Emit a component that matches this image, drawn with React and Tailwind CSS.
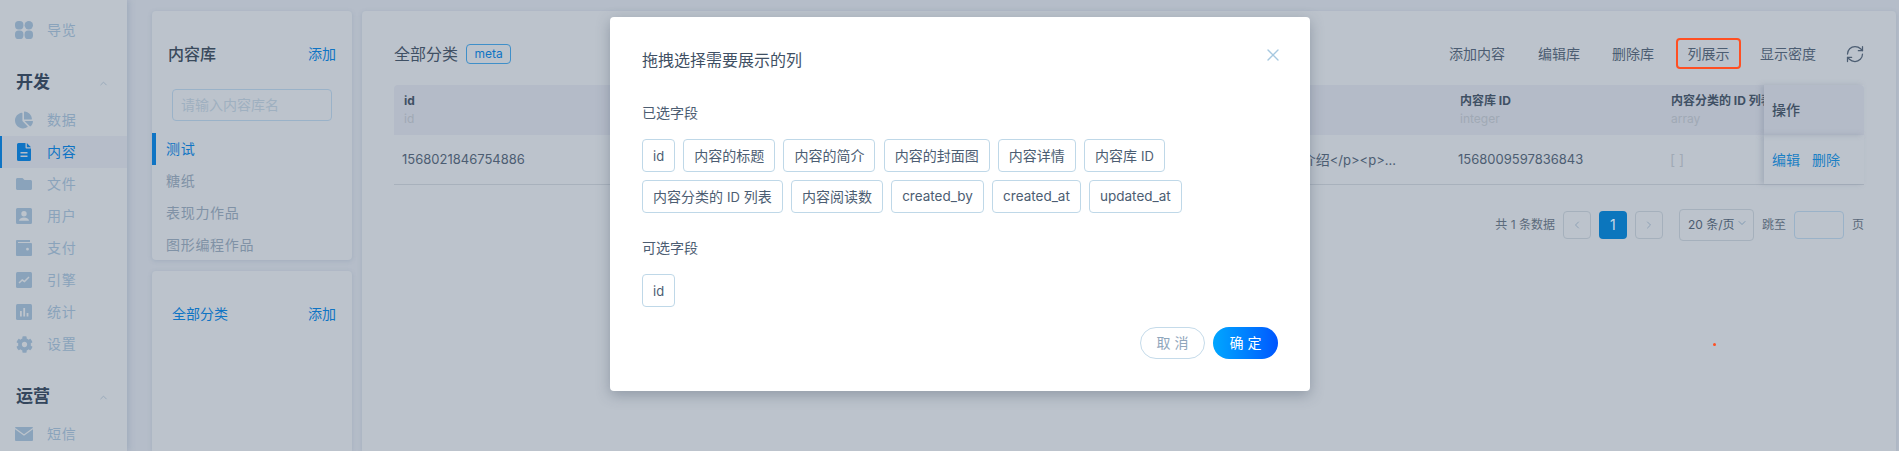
import React from "react";
import { ChevronDown, ChevronLeft, ChevronRight, ChevronUp, RefreshCw, X } from "lucide-react";
import { FaChartPie, FaCog, FaFolder } from "react-icons/fa";

const GridIcon = () => (
  <svg viewBox="0 0 18 18" className="w-[18px] h-[18px]" fill="currentColor">
    <rect x="0" y="0" width="8.4" height="8.4" rx="3.6" />
    <rect x="9.6" y="0" width="8.4" height="8.4" rx="4.2" />
    <rect x="0" y="9.6" width="8.4" height="8.4" rx="3.6" />
    <rect x="9.6" y="9.6" width="8.4" height="8.4" rx="3.6" />
  </svg>
);

const FileIcon = () => (
  <svg viewBox="0 0 14 18" className="w-[14px] h-[18px]" fill="currentColor">
    <path fillRule="evenodd" d="M1.500 0H8.500V4.500a1 1 0 0 0 1 1H14V16.500a1.500 1.500 0 0 1-1.500 1.500h-11A1.500 1.500 0 0 1 0 16.500v-15A1.500 1.500 0 0 1 1.500 0zM3.500 9v1.500h7V9zM3.500 12.500V14h7v-1.500z" />
    <path d="M9.800 0L14 4.300H9.800z" />
  </svg>
);

const UserIcon = () => (
  <svg viewBox="0 0 16 16" className="w-4 h-4" fill="currentColor">
    <path fillRule="evenodd" d="M1.5 0h13A1.5 1.5 0 0 1 16 1.5v13a1.5 1.5 0 0 1-1.5 1.5h-13A1.5 1.5 0 0 1 0 14.500v-13A1.500 1.500 0 0 1 1.500 0zM8 3a2.700 2.700 0 1 0 0 5.400A2.700 2.700 0 0 0 8 3zM3 12.800h10c0-2-2.200-3.300-5-3.300s-5 1.300-5 3.300z" />
  </svg>
);

const WalletIcon = () => (
  <svg viewBox="0 0 16 16" className="w-4 h-4" fill="currentColor">
    <path fillRule="evenodd" d="M1 0h13v2H2v1h13a1 1 0 0 1 1 1v11a1 1 0 0 1-1 1H1a1 1 0 0 1-1-1V1a1 1 0 0 1 1-1zm10.500 7.800a1.400 1.400 0 1 0 0 2.800 1.400 1.400 0 0 0 0-2.800z" />
  </svg>
);

const EngineIcon = () => (
  <svg viewBox="0 0 16 16" className="w-4 h-4">
    <rect width="16" height="16" rx="1.5" fill="currentColor" />
    <path d="M3 11l3.200-3 2.300 1.500L13 5" fill="none" stroke="#bdc4cc" strokeWidth="1.500" />
  </svg>
);

const StatsIcon = () => (
  <svg viewBox="0 0 16 16" className="w-4 h-4">
    <rect width="16" height="16" rx="1.5" fill="currentColor" />
    <path d="M4 7h1.800v5.500H4zM7.300 4h1.800v8.500H7.300zM10.600 9h1.800v3.500h-1.800z" fill="#bdc4cc" />
  </svg>
);

const MailIcon = () => (
  <svg viewBox="0 0 18 14" className="w-[18px] h-[14px]">
    <rect width="18" height="14" rx="1" fill="currentColor" />
    <path d="M0 1.500l9 6.500 9-6.500" fill="none" stroke="#bdc4cc" strokeWidth="1.200" />
  </svg>
);

const navItems = [
  { label: "数据", icon: <FaChartPie className="w-[18px] h-[18px]" /> },
  { label: "内容", icon: <FileIcon />, active: true },
  { label: "文件", icon: <FaFolder className="w-[18px] h-[16px]" /> },
  { label: "用户", icon: <UserIcon /> },
  { label: "支付", icon: <WalletIcon /> },
  { label: "引擎", icon: <EngineIcon /> },
  { label: "统计", icon: <StatsIcon /> },
  { label: "设置", icon: <FaCog className="w-[17px] h-[17px]" /> },
];

const NavItem = ({ label, icon, active }) => (
  <div
    className={`flex items-center h-8 border-l-2 ${
      active ? "border-[#0f74c4] bg-[#b6bdc9] text-[#0f74c4]" : "border-transparent text-[#8aa3bb]"
    }`}
  >
    <span className="w-[18px] ml-[13px] flex justify-center">{icon}</span>
    <span className="ml-[14px] text-sm tracking-[0.7px]">{label}</span>
  </div>
);

const SectionTitle = ({ children }) => (
  <div className="flex items-center justify-between pl-[16px] pr-[18px] h-8">
    <span className="text-[17px] font-bold text-[#34465c]">{children}</span>
    <ChevronUp className="w-[11px] h-[11px] text-[#96a7b9]" />
  </div>
);

// latin text in this app renders a size below the chinese around it
const Lat = ({ children }) => <span className="text-[13px]">{children}</span>;
const Field = ({ children }) => <span className="text-[13.5px]">{children}</span>;

const selected = [
  <Lat>id</Lat>,
  "内容的标题",
  "内容的简介",
  "内容的封面图",
  "内容详情",
  <>内容库 <Lat>ID</Lat></>,
  <>内容分类的 <Lat>ID</Lat> 列表</>,
  "内容阅读数",
  <Field>created_by</Field>,
  <Field>created_at</Field>,
  <Field>updated_at</Field>,
];

const Chip = ({ children }) => (
  <div className="h-[33px] px-[10px] flex items-center rounded border border-[#bfd8e8] text-sm text-[#4c5d72] whitespace-pre">
    <span>{children}</span>
  </div>
);

const PageBox = ({ children, active }) => (
  <div
    className={`w-7 h-7 rounded flex items-center justify-center text-sm ${
      active ? "bg-[#0c76bd] text-[#c9d9e6]" : "border border-[#a5b0bc] text-[#8fa2b6]"
    }`}
  >
    {children}
  </div>
);

export default function App() {
  return (
    <div
      className="relative flex h-[451px] w-[1899px] overflow-hidden bg-[#b5bdc9]"
      style={{ fontFamily: 'Inter, "Noto Sans CJK SC", sans-serif' }}
    >
      <aside className="w-[127px] shrink-0 bg-[#bdc4cc] shadow-[2px_0_6px_rgba(120,140,165,0.35)] pt-[14px]">
        <NavItem label="导览" icon={<GridIcon />} />
        <div className="mt-[21px] mb-[5px]">
          <SectionTitle>开发</SectionTitle>
        </div>
        {navItems.map((item) => (
          <NavItem key={item.label} {...item} />
        ))}
        <div className="mt-[21px] mb-[5px]">
          <SectionTitle>运营</SectionTitle>
        </div>
        <NavItem label="短信" icon={<MailIcon />} />
      </aside>

      <div className="flex flex-1 gap-[10px] pl-[25px] pr-[3px] pt-[11px]">
        <div className="w-[200px] shrink-0 flex flex-col gap-[11px]">
          <section className="h-[249px] rounded bg-[#bcc3cc] shadow-[0_1px_4px_rgba(120,140,165,0.3)] overflow-hidden">
            <div className="flex items-center justify-between pt-[31px] pl-4 pr-[16px]">
              <span className="text-base font-medium text-[#3a4a5c] leading-6">内容库</span>
              <span className="text-sm text-[#0f74c4]">添加</span>
            </div>
            <div className="mx-5 mt-[23px] h-8 rounded border border-[#9ab2c8] flex items-center px-2 text-sm text-[#9fb0c0]">
              请输入内容库名
            </div>
            <div className="mt-3 text-sm tracking-[0.7px] text-[#8092a6]">
              <div className="h-8 flex items-center border-l-4 border-[#0f74c4] pl-[10px] text-[#0f74c4]">测试</div>
              <div className="h-8 flex items-center pl-[14px]">糖纸</div>
              <div className="h-8 flex items-center pl-[14px]">表现力作品</div>
              <div className="h-8 flex items-center pl-[14px]">图形编程作品</div>
            </div>
          </section>
          <section className="flex-1 rounded-t bg-[#bcc3cc] shadow-[0_1px_4px_rgba(120,140,165,0.3)]">
            <div className="flex items-center justify-between pt-[33px] pl-5 pr-4 text-sm text-[#0f74c4]">
              <span>全部分类</span>
              <span>添加</span>
            </div>
          </section>
        </div>

        <main className="flex-1 rounded-t bg-[#bcc3cc] shadow-[0_1px_4px_rgba(120,140,165,0.3)] px-8">
          <div className="flex items-center justify-between h-[31px] mt-[27px]">
            <div className="flex items-center">
              <span className="text-base text-[#3f5064]">全部分类</span>
              <span className="ml-2 h-5 w-[45px] flex items-center justify-center rounded border border-[#3f8fc9] text-xs text-[#0f74c4]">
                meta
              </span>
            </div>
            <div className="flex items-center text-sm text-[#4c5d72]">
              <span>添加内容</span>
              <span className="ml-[33px]">编辑库</span>
              <span className="ml-[32px]">删除库</span>
              <span className="ml-[22px] h-[31px] w-[65px] flex items-center justify-center rounded border-2 border-[#ff4f22]">
                列展示
              </span>
              <span className="ml-[19px]">显示密度</span>
              <RefreshCw className="ml-[29px] -mr-[1px] w-[20px] h-[20px]" strokeWidth={1.5} />
            </div>
          </div>

          <div className="flex mt-4 h-[50px] bg-[#b4bbc8] rounded-t text-xs">
            <div className="w-[1056px] pl-[10px] flex flex-col justify-center">
              <span className="font-bold text-[#3f5064] leading-[18px]">id</span>
              <span className="text-[#a0a9b5] leading-[18px]">id</span>
            </div>
            <div className="w-[211px] pl-[10px] flex flex-col justify-center">
              <span className="font-bold text-[#3f5064] leading-[18px]">内容库 ID</span>
              <span className="text-[#a0a9b5] leading-[18px]">integer</span>
            </div>
            <div className="w-[103px] pl-[10px] flex flex-col justify-center overflow-hidden whitespace-nowrap">
              <span className="font-bold text-[#3f5064] leading-[18px]">内容分类的 ID 列表</span>
              <span className="text-[#a0a9b5] leading-[18px]">array</span>
            </div>
            <div className="flex-1 pl-2 flex items-center text-sm font-medium text-[#3f5064] shadow-[-3px_0_5px_rgba(120,135,155,0.35)]">
              操作
            </div>
          </div>
          <div className="flex h-[50px] border-b border-[#a8b1bc] text-sm text-[#4c5d72]">
            <div className="w-[700px] pl-2 flex items-center"><Lat>1568021846754886</Lat></div>
            <div className="w-[356px] pr-[54px] flex items-center justify-end whitespace-pre">
              <span>产品介绍<Lat>&lt;/p&gt;&lt;p&gt;...</Lat></span>
            </div>
            <div className="w-[211px] pl-2 flex items-center"><Lat>1568009597836843</Lat></div>
            <div className="w-[103px] pl-[9px] flex items-center text-[#a0a9b5]">[ ]</div>
            <div className="flex-1 pl-2 flex items-center gap-3 text-[#1b7fc4] shadow-[-3px_0_5px_rgba(120,135,155,0.35)]">
              <span>编辑</span>
              <span>删除</span>
            </div>
          </div>

          <div className="flex items-center justify-end mt-6 text-xs text-[#5b6a7b]">
            <span className="mr-2">共 1 条数据</span>
            <PageBox><ChevronLeft className="w-3 h-3" /></PageBox>
            <span className="w-2" />
            <PageBox active>1</PageBox>
            <span className="w-2" />
            <PageBox><ChevronRight className="w-3 h-3" /></PageBox>
            <div className="ml-4 w-[75px] h-8 rounded border border-[#a5b0bc] flex items-center pl-2 text-[#4c5d72] whitespace-nowrap">
              20 条/页
              <ChevronDown className="w-3 h-3 ml-[1px] mb-1 text-[#7f9ab3]" />
            </div>
            <span className="ml-2">跳至</span>
            <div className="ml-2 w-[50px] h-7 rounded border border-[#9ab2c8]" />
            <span className="ml-2">页</span>
          </div>
        </main>
      </div>

      {/* stray dot from the screenshot */}
      <span className="absolute left-[1713px] top-[343px] w-[3px] h-[3px] rounded-full bg-[#ff4f22]" />

      <div className="absolute left-[610px] top-[17px] w-[700px] h-[374px] rounded bg-white shadow-[0_4px_14px_rgba(60,75,95,0.35)] px-8 pt-[31px] pb-8">
        <div className="flex items-start justify-between">
          <span className="text-base leading-6 text-[#3f5064]">拖拽选择需要展示的列</span>
          <X className="w-5 h-5 text-[#a6c8e0] -mt-[3px] -mr-[5px]" strokeWidth={1.6} />
        </div>
        <div className="mt-[31px] text-sm leading-5 text-[#4c5d72]">已选字段</div>
        <div className="mt-4 flex flex-wrap gap-x-[8.2px] gap-y-2">
          {selected.map((text, i) => (
            <Chip key={i}>{text}</Chip>
          ))}
        </div>
        <div className="mt-[25px] text-sm leading-5 text-[#4c5d72]">可选字段</div>
        <div className="mt-4 flex">
          <Chip><Lat>id</Lat></Chip>
        </div>
        <div className="mt-5 flex justify-end gap-2">
          <button className="w-[65px] h-8 rounded-full border border-[#c5dbea] text-sm whitespace-pre text-[#8fa6bc]">取 消</button>
          <button className="w-[65px] h-8 rounded-full bg-gradient-to-r from-[#00a6ff] to-[#0055ff] text-sm whitespace-pre text-white">确 定</button>
        </div>
      </div>
    </div>
  );
}
